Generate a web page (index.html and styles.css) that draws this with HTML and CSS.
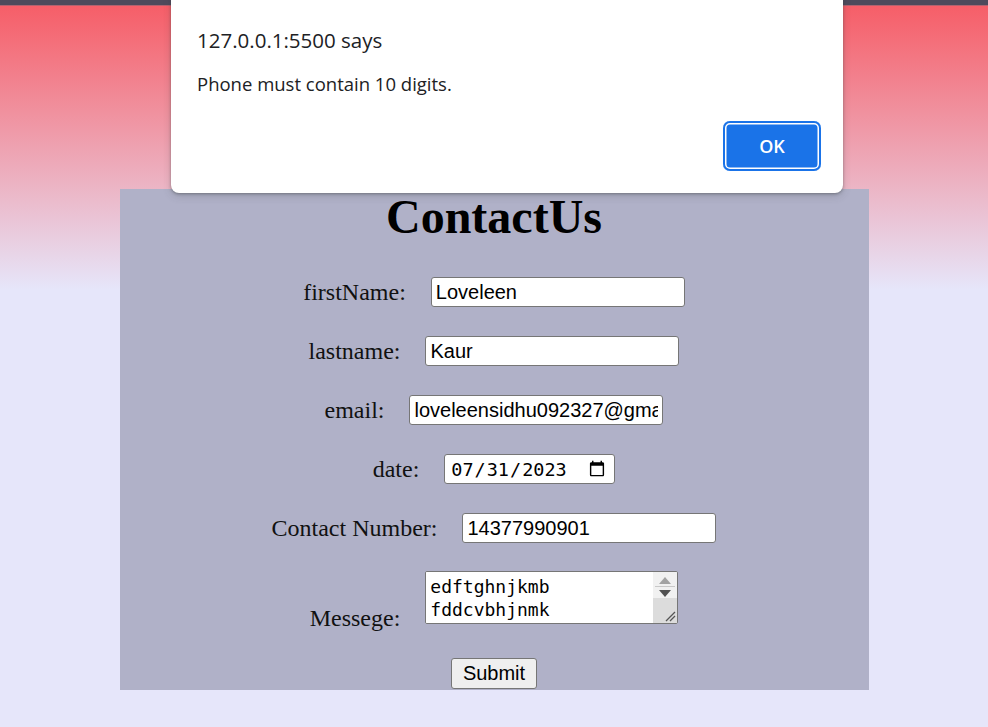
FILE: index.html
```html
<!DOCTYPE html>
<html lang="en">
<head>
<meta charset="utf-8">
<title>ContactUs</title>
<link rel="stylesheet" href="styles.css">
</head>
<body>
  <div class="dialog" role="alertdialog">
    <div class="dialog-title">127.0.0.1:5500 says</div>
    <div class="dialog-msg">Phone must contain 10 digits.</div>
    <div class="dialog-actions"><button class="ok-btn" type="button">OK</button></div>
  </div>

  <main class="card">
    <h1 class="heading">ContactUs</h1>
    <form class="form">
      <div class="row"><label class="lbl" for="fn">firstName:</label><input class="field" id="fn" type="text" value="Loveleen"></div>
      <div class="row"><label class="lbl" for="ln">lastname:</label><input class="field" id="ln" type="text" value="Kaur"></div>
      <div class="row"><label class="lbl" for="em">email:</label><input class="field" id="em" type="text" value="loveleensidhu092327@gmail.com"></div>
      <div class="row"><label class="lbl" for="dt">date:</label><input class="field date" id="dt" type="date" value="2023-07-31"></div>
      <div class="row"><label class="lbl" for="ph">Contact Number:</label><input class="field" id="ph" type="text" value="14377990901"></div>
      <div class="row row-msg">
        <label class="lbl lbl-msg" for="msg">Messege:</label>
        <div class="ta">
          <textarea class="ta-text" id="msg">edftghnjkmb
fddcvbhjnmk
xcvbnm</textarea>
          <div class="ta-bar">
            <div class="ta-btns">
              <svg class="arr" width="12" height="7" viewBox="0 0 12 7"><path d="M0 7 L6 0 L12 7 Z" fill="#a3a3a3"/></svg>
              <div class="ta-sep"></div>
              <svg class="arr" width="12" height="7" viewBox="0 0 12 7"><path d="M0 0 L12 0 L6 7 Z" fill="#505050"/></svg>
            </div>
            <div class="ta-track">
              <svg class="grip" width="12" height="12" viewBox="0 0 12 12"><path d="M11 2 L2 11 M11 6 L6 11" stroke="#555" stroke-width="1.3" fill="none"/></svg>
            </div>
          </div>
        </div>
      </div>
      <div class="row row-submit"><button class="submit" type="button">Submit</button></div>
    </form>
  </main>
</body>
</html>
```

FILE: styles.css
```css
html, body {
  margin: 0;
  padding: 0;
}

body {
  min-height: 727px;
  font-family: "Liberation Serif", "Times New Roman", serif;
  background:
    linear-gradient(to bottom, #4e4a5c 0, #4e4a5c 5px, #6c6676 5px, #f65e68 6px, #e6e6fa 290px) no-repeat top / 100% 290px,
    #e6e6fa;
  position: relative;
  overflow: hidden;
}

/* ---------- browser alert ---------- */
.dialog {
  position: absolute;
  left: 171px;
  top: -8px;
  width: 672px;
  box-sizing: border-box;
  padding: 34px 22px 22px 26px;
  background: #fff;
  border-radius: 8px;
  box-shadow: 0 1px 3px rgba(60, 64, 67, 0.45), 0 3px 8px rgba(60, 64, 67, 0.2);
  font-family: "Open Sans", "Noto Sans", sans-serif;
  color: #202124;
  z-index: 5;
}

.dialog-title {
  font-size: 20.5px;
  line-height: 28px;
}

.dialog-msg {
  margin-top: 18px;
  font-size: 18.5px;
  line-height: 24px;
}

.dialog-actions {
  margin-top: 25px;
  display: flex;
  justify-content: flex-end;
}

.ok-btn {
  width: 98px;
  height: 50px;
  border: none;
  border-radius: 7px;
  background: #1a73e8;
  box-shadow: inset 0 0 0 2px #1a73e8, inset 0 0 0 3.5px #ffffff;
  color: #fff;
  font-family: "Open Sans", "Noto Sans", sans-serif;
  font-weight: 600;
  font-size: 18px;
  padding: 0;
}

/* ---------- form card ---------- */
.card {
  width: 749px;
  height: 501px;
  margin: 189px auto 0;
  background: #b0b1c8;
}

.heading {
  margin: 0;
  font-size: 48px;
  font-weight: bold;
  line-height: 55px;
  text-align: center;
  color: #000;
}

.form {
  display: flex;
  flex-direction: column;
  gap: 29px;
  padding-top: 33px;
}

.row {
  display: flex;
  justify-content: center;
  align-items: center;
  gap: 25px;
  height: 30px;
}

.lbl {
  font-size: 24px;
  color: #111;
}

.field {
  box-sizing: border-box;
  width: 254px;
  height: 30px;
  margin: 0;
  padding: 0 4px;
  border: 1px solid #767676;
  border-radius: 3px;
  background: #fff;
  font-family: "Liberation Sans", Arial, sans-serif;
  font-size: 20px;
  color: #000;
}

.date {
  width: 171px;
  padding: 0 6px 0 5px;
  font-family: "DejaVu Sans Mono", monospace;
  font-size: 18.5px;
}

.row-msg {
  height: 53px;
  margin-top: -1px;
  align-items: flex-end;
}

.lbl-msg {
  margin-bottom: -8px;
}

.ta {
  box-sizing: border-box;
  width: 253px;
  height: 53px;
  display: flex;
  border: 1px solid #767676;
  border-radius: 2px;
  background: #fff;
  overflow: hidden;
}

.ta-text {
  flex: 1;
  min-width: 0;
  margin: 0;
  border: none;
  outline: none;
  resize: none;
  overflow: hidden;
  padding: 3px 4px;
  font-family: "DejaVu Sans Mono", monospace;
  font-size: 18px;
  line-height: 23px;
  color: #000;
  background: #fff;
}

.ta-bar {
  width: 24px;
  display: flex;
  flex-direction: column;
}

.ta-btns {
  height: 26px;
  background: #f1f1f1;
  display: flex;
  flex-direction: column;
  align-items: center;
  padding-top: 5px;
  box-sizing: border-box;
}

.arr {
  display: block;
}

.ta-sep {
  width: 20px;
  height: 1px;
  background: #c8c8c8;
  margin: 2px 0 3px;
}

.ta-track {
  flex: 1;
  background: #dcdcdc;
  display: flex;
  justify-content: flex-end;
  align-items: flex-end;
}

.grip {
  display: block;
  margin: 0 1px 1px 0;
}

.row-submit {
  height: 31px;
  margin-top: 5px;
}

.submit {
  box-sizing: border-box;
  width: 86px;
  height: 31px;
  margin: 0;
  padding: 0;
  border: 1px solid #767676;
  border-radius: 3px;
  background: #efefef;
  font-family: "Liberation Sans", Arial, sans-serif;
  font-size: 20px;
  color: #000;
}
```
